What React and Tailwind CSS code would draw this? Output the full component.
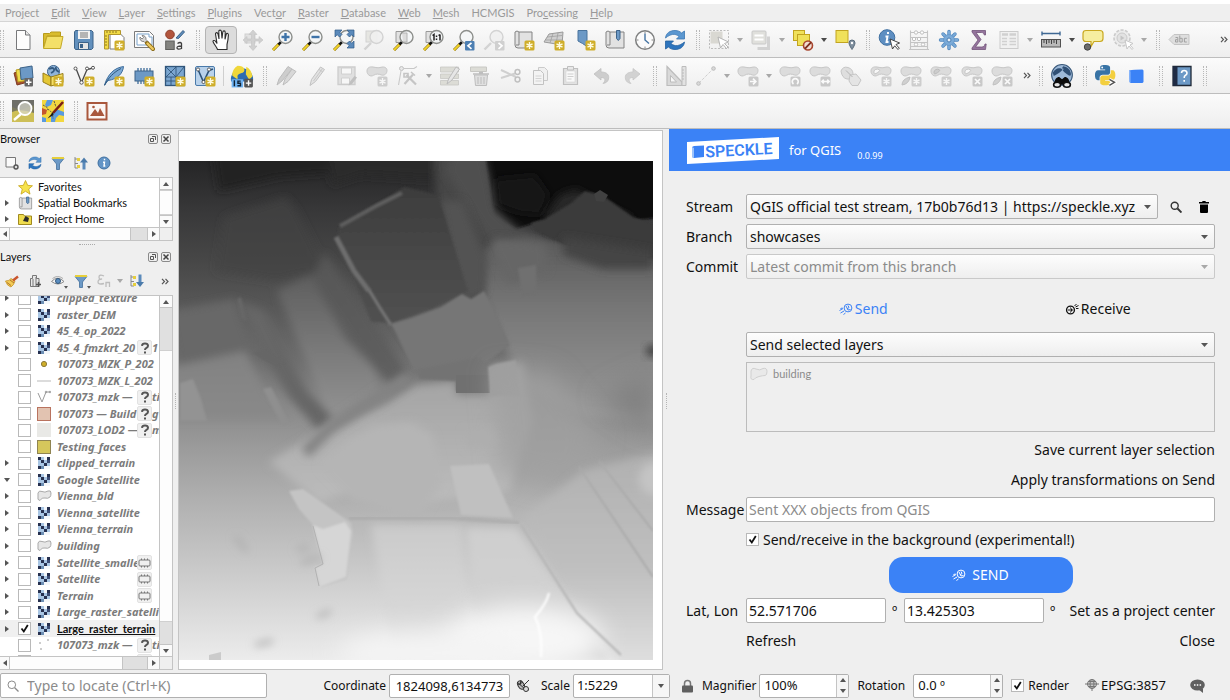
import React from "react";

/* ---------- icon primitives ---------- */

function Svg({ children, size = "size-[22px]", box = "0 0 22 22" }) {
  return (
    <svg viewBox={box} className={`${size} shrink-0`} fill="none" aria-hidden="true">
      {children}
    </svg>
  );
}

const Star = ({ off }) => (
  <g>
    <rect x="11.500" y="11.500" width="10" height="10" rx="1.500" fill={off ? "#cdcdcd" : "#cfae2a"} />
    <path d="M16.500 13v7M13.500 14.800l6 3.400M19.500 14.800l-6 3.400" stroke={off ? "#f6f6f6" : "#fffbe0"} strokeWidth="1.400" />
  </g>
);

const Lens = ({ off, children }) => (
  <g>
    {off ? (
      <path d="M8 14l-6.500 6.500" stroke="#d3d3d3" strokeWidth="2.400" />
    ) : (
      <g>
        <path d="M7 15l-6 6" stroke="#8a6d00" strokeWidth="3" />
        <path d="M7 15l-6 6" stroke="#f1d32c" strokeWidth="1.800" />
        <path d="M9 13l-2.600 2.600" stroke="#111" strokeWidth="2.600" />
      </g>
    )}
    <circle cx="13.500" cy="8" r="6.500" fill={off ? "#f0f0f0" : "#f4f6f7"} fillOpacity=".9" stroke={off ? "#d3d3d3" : "#8d8f8c"} strokeWidth="1.400" />
    {children}
  </g>
);

const Blob = ({ hole }) => (
  <g>
    <path d="M1 6c0-3.500 3-4.500 6-4s5 1.200 8 .3 6 .2 6 3.200-2.500 5.500-5.500 4.500-5-1.500-8 .3S1 10 1 6z" fill="#dcdcdc" stroke="#c6c6c6" />
    {hole && <path d="M4 6.500c0-2 3-3 5-2s-1 3-3 4-2 0-2-2z" fill="#f8f8f8" stroke="#c0c0c0" strokeWidth=".9" />}
  </g>
);

const GreyBadge = ({ d }) => (
  <g>
    <rect x="11.500" y="11.500" width="10" height="10" rx="1.500" fill="#c9c9c9" />
    <path d={d} stroke="#fafafa" strokeWidth="1.700" />
  </g>
);

/* ---------- toolbar drawings ---------- */

const icons = {
  newProject: (
    <Svg>
      <path d="M4.500 1.500h9l4.500 4.500v14.500H4.500z" fill="#fdfdfd" stroke="#77787a" />
      <path d="M13.500 1.500V6H18" fill="#e8e8e8" stroke="#77787a" />
    </Svg>
  ),
  open: (
    <Svg>
      <path d="M1.500 4.500h6l1.500-1.500h9.500v4H5l-3.500 12z" fill="#d9bc2e" stroke="#b89b1c" />
      <path d="M5 7.500h16l-2.500 12h-17z" fill="#f3e069" stroke="#c4a928" />
    </Svg>
  ),
  save: (
    <Svg>
      <path d="M2.500 1.500h16l1.500 1.500v16l-1.500 1.500h-16L1.500 19V3z" fill="#6290bd" stroke="#3c6288" />
      <path d="M5 1.500h12V10H5z" fill="#f3f3f3" />
      <path d="M7 4h8M7 6h8M7 8h8" stroke="#777" />
      <path d="M5.500 13.500h10v7h-10z" fill="#e4e4e4" stroke="#3c6288" />
      <path d="M7 15h3v4H7z" fill="#3c6288" />
    </Svg>
  ),
  layout: (
    <Svg>
      <path d="M7 4.500h10l4 4V20H7z" fill="#fff" stroke="#7a7a7a" />
      <path d="M1.500 1.500h16v4h-12V20h-4z" fill="#f0da45" stroke="#b3972a" />
      <path d="M4 2v2M7 2v2M10 2v2M13 2v2M2 7h2M2 10h2M2 13h2M2 16h2" stroke="#8e7620" />
      <Star />
    </Svg>
  ),
  layoutManager: (
    <Svg>
      <path d="M1.500 2.500h15l4 4v12h-19z" fill="#fbfbfb" stroke="#7a7a7a" />
      <path d="M4 5h12v3h3v8H4z" fill="#fff" stroke="#7ba3cb" />
      <path d="M7 8a3.500 3.500 0 0 0 4 4.500l2 2 2-2-2-2A3.500 3.500 0 0 0 9 6.500l1.500 2-1.500 1.500z" fill="#d6d6d6" stroke="#707070" strokeWidth=".8" />
      <path d="M14 14l6 6" stroke="#8b6b16" strokeWidth="4" strokeLinecap="round" />
      <path d="M14.500 14.500l5.300 5.300" stroke="#ecc85e" strokeWidth="2.400" strokeLinecap="round" />
    </Svg>
  ),
  style: (
    <Svg>
      <circle cx="6" cy="5.500" r="4.300" fill="#b2553d" stroke="#8d3d29" />
      <path d="M12 9l7-7.500 1.500 1.500-6 6.500z" fill="#5d8cbb" stroke="#3c6288" />
      <rect x="1.700" y="12" width="8.500" height="8.500" fill="#848480" stroke="#5f5f5c" />
      <path d="M13.500 14.500q3-2 4 0v5q-4 1.500-4.500-.5t4.500-2" stroke="#3d3d3d" strokeWidth="1.300" />
    </Svg>
  ),
  pan: (
    <Svg>
      <path d="M7.500 20.500c-1-3-3.500-5-4.500-8 0-1.500 2-1.500 3 .5l1 1.500L5.500 5c0-1.800 2-1.800 2.500 0l1 5L8.800 2.500c0-1.800 2.400-1.800 2.600 0l.6 7 .8-6.500c.3-1.700 2.400-1.500 2.400.3l-.2 7 1.200-5c.6-1.500 2.300-1 2.200.6-.2 4-.5 6.500-1.400 9.600v5z" fill="#fff" stroke="#2c2c2c" strokeWidth="1.100" />
    </Svg>
  ),
  panSel: (
    <Svg>
      <rect x="3" y="5" width="10" height="9" fill="#e2e2e2" stroke="#cfcfcf" />
      <path d="M11 1l4 4.500H12.500v4.500H17V7.500l4 3.500-4 3.500V12h-4.500v5H15l-4 4.500L7 17h2.500v-5H5v2.500L1 11l4-3.500V10h4.500V5.500H7z" fill="#d0d0d0" stroke="#c2c2c2" strokeWidth=".6" />
    </Svg>
  ),
  zoomIn: <Svg><Lens><path d="M13.500 4v8M9.500 8h8" stroke="#3e73a8" strokeWidth="2.400" /></Lens></Svg>,
  zoomOut: <Svg><Lens><path d="M9.500 8h8" stroke="#3e73a8" strokeWidth="2.400" /></Lens></Svg>,
  zoomFull: (
    <Svg>
      <Lens />
      <path d="M2 1h7L6.800 3.200 9 5.500 6.500 8 4.200 5.700 2 8zM21 1h-7l2.200 2.200L14 5.500 16.500 8l2.300-2.300L21 8zM21 19h-7l2.200-2.200L14 14.500l2.500-2.500 2.300 2.300L21 12z" fill="#5b8abb" stroke="#2f5a86" strokeWidth=".7" />
    </Svg>
  ),
  zoomSel: <Svg><rect x="3" y="2" width="11" height="11" fill="#e6e6e2" stroke="#d2d2d2" /><Lens off /></Svg>,
  zoomLayer: <Svg><path d="M3 2.500h11v11H3z" fill="#e2e2e2" stroke="#9a9a9a" /><Lens><path d="M9 4h5v9h-4" fill="#dcdcdc" stroke="#aaa" strokeWidth=".8" /></Lens></Svg>,
  zoomNative: (
    <Svg>
      <path d="M3 2.500h11v11H3z" fill="#e2e2e2" stroke="#9a9a9a" />
      <Lens><path d="M9.500 6.500l1.500-1v6M17 5.500v6M15.500 6.500l1.500-1M13.500 6.500v1.500M13.500 9.500v1.500" stroke="#222" strokeWidth="1.500" /></Lens>
    </Svg>
  ),
  zoomLast: <Svg><Lens /><rect x="12" y="12" width="9.500" height="9.500" rx="1" fill="#4d7fb2" /><path d="M18.500 13.800l-3.500 3 3.500 3" stroke="#fff" strokeWidth="1.700" /></Svg>,
  zoomNext: <Svg><Lens off /><rect x="12" y="12" width="9.500" height="9.500" rx="1" fill="#d0d0d0" /><path d="M15.500 13.800l3.500 3-3.500 3" stroke="#fff" strokeWidth="1.700" /></Svg>,
  newMap: <Svg><path d="M2 3q2-2 4 0h13v16H5q-3 0-3-3z" fill="#e2e2e2" stroke="#838383" /><path d="M6 3v13H3" stroke="#838383" /><Star /></Svg>,
  map3d: <Svg><path d="M6 5l14-2-1 13L1 13z" fill="#d0d0d0" stroke="#9a9a9a" /><path d="M10 4.500L7 14M15 4l-2 11M4 8l15-1.500M2.500 11l17 0" stroke="#a0a0a0" strokeWidth=".8" /><Star /></Svg>,
  newBookmark: <Svg><path d="M4 1.500h9v16l-4.500-3L4 12z" fill="#6c99c6" stroke="#49739c" /><Star /></Svg>,
  bookmarks: (
    <Svg>
      <path d="M2 3q2-2 4 0h14v16H5q-3 0-3-3z" fill="#e2e2e2" stroke="#838383" />
      <path d="M6 3v13H3" stroke="#838383" />
      <path d="M12.500 1.500h3.500v8l-1.700 2-1.800-2z" fill="#6c99c6" stroke="#3c6288" />
    </Svg>
  ),
  clock: <Svg><circle cx="11" cy="11" r="9.300" fill="#fbfbfb" stroke="#7f8080" strokeWidth="1.500" /><path d="M11 4.500V11l4 3.500" stroke="#4473a2" strokeWidth="1.400" /><path d="M11 2.500v2M11 17.500v2M2.500 11h2M17.500 11h2" stroke="#888" /></Svg>,
  refresh: (
    <Svg>
      <path d="M1.500 9C2 4 6 1.500 11 1.500c3 0 5 1 6.500 2.500L20.500 2v8h-8L15 7.500C11 4 6.500 5 1.500 9z" fill="#5b97d0" stroke="#3a76b2" strokeWidth=".8" />
      <path d="M20.500 13c-.5 5-4.500 7.500-9.500 7.500-3 0-5-1-6.500-2.500L1.500 20v-8h8L7 14.500c4 3.500 8.500 2.500 13.500-1.500z" fill="#2e75bd" stroke="#2462a0" strokeWidth=".8" />
    </Svg>
  ),
  select: <Svg><rect x="1.500" y="1.500" width="19" height="18" stroke="#bcbcbc" strokeDasharray="2 1.500" /><rect x="2.500" y="2.500" width="12" height="12" fill="#d9d8d2" /><path d="M10 8l2.500 11 2.500-3.500 3.500 4 1.500-1.500-3.500-3.500 4-1.500z" fill="#fff" stroke="#b4b4b4" /></Svg>,
  selectForm: <Svg><path d="M18.500 7.500v12H7.500" stroke="#d2d2d2" strokeWidth="3" /><rect x="2" y="2" width="14" height="13" rx="1" fill="#e0e0dc" stroke="#c8c8c8" /><path d="M4.500 6.500h9M4.500 10.500h9" stroke="#fff" strokeWidth="2" /></Svg>,
  deselect: (
    <Svg>
      <rect x="1.500" y="1.500" width="11" height="10" fill="#f0e15a" stroke="#c2a420" />
      <rect x="5.500" y="5.500" width="12" height="11" fill="#f0e15a" stroke="#c2a420" />
      <circle cx="16" cy="16.500" r="4.500" fill="#f2ddd3" stroke="#a8452e" strokeWidth="1.600" />
      <path d="M13 19.700l6-6.400" stroke="#7c2e1e" strokeWidth="1.800" />
    </Svg>
  ),
  selectLoc: <Svg><rect x="2" y="1.500" width="12" height="12" fill="#f0e15a" stroke="#c2a420" /><path d="M18 11a3 3 0 0 1 3 3c0 2-3 6.500-3 6.500S15 16 15 14a3 3 0 0 1 3-3z" fill="#80909f" stroke="#596b7c" /><circle cx="18" cy="14" r="1.200" fill="#fff" /></Svg>,
  identify: (
    <Svg>
      <circle cx="9" cy="8.500" r="7.800" fill="#5e8fc2" stroke="#3f6fa0" />
      <path d="M10 3v2M7.500 7.500h2l-1 5.500h2" stroke="#fff" strokeWidth="1.900" />
      <path d="M12 10l2.500 10 2.200-3.200 3.300 3.700 1.300-1.300-3.300-3.700 3.600-1.500z" fill="#fff" stroke="#333" strokeWidth=".9" />
    </Svg>
  ),
  abacus: <Svg><path d="M2.500 20V1.500M19.500 20V1.500M1 20.500h20M2.500 3.500h17M2.500 8.500h17M2.500 13.500h17M2.500 17.500h17" stroke="#c4c4c4" strokeWidth="1.100" /><g fill="#fff" stroke="#c0c0c0"><circle cx="8" cy="3.500" r="1.700" /><circle cx="14" cy="3.500" r="1.700" /><circle cx="6" cy="10" r="1.700" /><circle cx="11" cy="10" r="1.700" /><circle cx="8" cy="15.500" r="1.700" /><circle cx="15" cy="15.500" r="1.700" /></g></Svg>,
  gear: <Svg><g stroke="#4f86bd" strokeWidth="3.400" strokeLinecap="round"><path d="M11 2.500v17M2.500 11h17M5 5l12 12M17 5L5 17" /></g><g stroke="#7aaad8" strokeWidth="2" strokeLinecap="round"><path d="M11 2.500v17M2.500 11h17M5 5l12 12M17 5L5 17" /></g><circle cx="11" cy="11" r="5.500" fill="#7aaad8" stroke="#5b90c4" strokeWidth=".6" /><circle cx="11" cy="11" r="2" fill="#e9f0f7" stroke="#4b7fb2" /></Svg>,
  sigma: <Svg><path d="M4 1.500h13.500V6h-1.200c-.5-2-1.300-2.500-3-2.500H8L13 10.500 7.500 18h6c2 0 3-.8 3.500-3h1.200l-.7 5.500H4V19l6-8-6-8z" fill="#94749c" stroke="#72547a" strokeWidth=".8" /></Svg>,
  table: <Svg><rect x="2" y="2.500" width="18" height="17" fill="#f0f0f0" stroke="#cbcbcb" /><path d="M4 5.500h6M11.500 5.500h6.500" stroke="#d0d0d0" strokeWidth="2.400" /><path d="M4 9.500h5M11.500 9.500h6.500M4 12.500h5M11.500 12.500h6.500M4 15.500h5M11.500 15.500h6.500" stroke="#d0d0d0" strokeWidth="1.400" /></Svg>,
  measure: <Svg><path d="M2 4.500h18M2 2.500v4M20 2.500v4" stroke="#3f6894" strokeWidth="1.400" /><rect x="1.500" y="10.500" width="19" height="7.500" fill="#b9b9b9" stroke="#505050" /><path d="M4 11v3M6.500 11v4M9 11v3M11.500 11v4M14 11v3M16.500 11v4" stroke="#444" /></Svg>,
  mapTip: <Svg><path d="M4 1.500h14q3 0 3 3v5q0 3-3 3h-6l-3 5v-5H4q-3 0-3-3v-5q0-3 3-3z" fill="#f6eea0" stroke="#c9a821" strokeWidth="1.200" /><circle cx="5.500" cy="18" r="3.200" fill="#6c6c6c" stroke="#444" /></Svg>,
  action: <Svg><circle cx="10" cy="9" r="8" fill="#ececec" stroke="#cbcbcb" strokeWidth="1.600" strokeDasharray="3 1.500" /><circle cx="10" cy="9" r="5" fill="#e2e2e2" stroke="#cbcbcb" /><path d="M8.500 6.500L12.500 9l-4 2.500z" fill="#c4c4c4" /><path d="M13 11l2 9 2-3 3 3.500 1-1.200-3-3.300 3-1.500z" fill="#fff" stroke="#c7c7c7" /></Svg>,
  label: <Svg><path d="M6 5.500h15v10H6l-5-5z" fill="#dedede" stroke="#c4c4c4" /><path d="M7.500 8.500h2.300v4.500H7.500v-2.300h2M11.800 6.500V13h2.400V9.300h-2.400M18.800 9.300h-2.400V13h2.400" stroke="#a0a0a0" /></Svg>,

  dataSource: <Svg><path d="M2 8l10-3 4 12-11 3z" fill="#a6502f" stroke="#7d3a20" /><path d="M4 5l11-2 2 12-11 2z" fill="#efdb4c" stroke="#b89b1c" /><path d="M8 3l12-2 1 12-12 1.500z" fill="#6c99c6" stroke="#3c6288" /><rect x="12.500" y="13" width="8.500" height="8.500" rx="1" fill="#666" /><path d="M16.700 14.500v5.500M14 17.200h5.500" stroke="#fff" strokeWidth="1.500" /></Svg>,
  geopackage: <Svg><circle cx="11.500" cy="6.500" r="6" fill="#8fb3d8" stroke="#39618a" /><path d="M7 4q4-2 5 0t-3 4M14 2q-1 3 3 5" stroke="#345a80" strokeWidth="1.800" /><path d="M1 8l8 4v9l-8-4z" fill="#e4c735" stroke="#977c18" /><path d="M9 12l12-3.500v9L9 21z" fill="#f5df66" stroke="#977c18" /><Star /></Svg>,
  shapefile: <Svg><path d="M3 3.500l5.500 14L14 4.500l6-1.500" stroke="#4a4a4a" strokeWidth="1.300" /><g fill="#fff" stroke="#555"><circle cx="2.500" cy="3.500" r="1.500" /><circle cx="8.500" cy="17.500" r="1.700" /><circle cx="14" cy="3.500" r="1.500" /><circle cx="20" cy="2.800" r="1.500" /></g><Star /></Svg>,
  spatialite: <Svg><path d="M1.500 20C5 9 11 3 20.500 1.500 20 8 15 14 5 15.500z" fill="#7ca9d4" stroke="#3f6e9c" /><path d="M1.500 20.500C5 13 11 7 18 3.500" stroke="#2e587f" /><Star /></Svg>,
  memory: <Svg><path d="M5 3v16M8 3v16M11 3v16M14 3v16M17 3v16" stroke="#3f6e9c" strokeWidth="1.300" /><rect x="2" y="6" width="18" height="10" fill="#6c99c6" stroke="#3c6288" /><Star /></Svg>,
  mesh: <Svg><rect x="1.500" y="1.500" width="19" height="19" fill="#7ba6d0" stroke="#31567b" strokeWidth="1.300" /><path d="M1.500 12h19M12 1.500v19M2 2l10 10 8-10M2 12L12 2M7 12v8M2 16h10" stroke="#31567b" strokeWidth=".9" /><Star /></Svg>,
  virtual: <Svg><rect x="1.500" y="1.500" width="19" height="19" rx="1.500" fill="#b9d2eb" stroke="#4a7aaa" /><path d="M4 4.500L9.500 17 15 5.500l4-1.500" stroke="#2d5379" strokeWidth="1.600" /><g fill="#fff" stroke="#444" strokeWidth=".8"><circle cx="4" cy="4.500" r="1.600" /><circle cx="9.500" cy="17" r="1.600" /><circle cx="15" cy="4.500" r="1.600" /></g><Star /></Svg>,
  gis: <Svg size="size-6"><path d="M1 16A10.200 10.200 0 1 1 21 16z" fill="#2f6db0" /><path d="M7 1.500q5 0 6 3t-3 4-3 4-5-2q0-6 5-9zM15 2.500q5 3 5.500 9l-3 3-3-5z" fill="#f0d73a" /><path d="M1.500 14H12v7.500H1.500z" fill="#6fb3f2" /><path d="M4 15v5.500M9.800 15.700H7.300v2h2.300v2.300H6.800" stroke="#123" strokeWidth="1.300" /><rect x="13" y="13.500" width="8" height="8" rx="1" fill="#555" /><path d="M17 15v5M14.500 17.500h5" stroke="#fff" strokeWidth="1.300" /></Svg>,
  edits: <Svg><path d="M2 20l2-6L13 1.500l4 2.500-10 12z" fill="#cdcdcd" stroke="#bdbdbd" /><path d="M8 20l2-6L17 4l4 2.500-8 10z" fill="#d8d8d8" stroke="#bdbdbd" /></Svg>,
  pencil: <Svg><path d="M4 20.500l1.500-6L14.500 2l4 2.500-9 12z" fill="#e2e2e2" stroke="#c2c2c2" /><path d="M13 4.500l4 2.500M16.500 3.500l-9 12.500" stroke="#c8c8c8" /></Svg>,
  saveEdits: <Svg><path d="M2 2h17v17.500H2z" fill="#e0e0e0" stroke="#cdcdcd" strokeWidth="1.300" /><path d="M5.500 3h10v6h-10zM5.500 13h8v6h-8z" fill="#f7f7f7" stroke="#cdcdcd" strokeWidth=".9" /><path d="M12.500 20.500l1.500-4 4.500-5.500 2.500 1.500-5 6.500z" fill="#c0c0c0" /></Svg>,
  addPoly: <Svg><Blob /><Star off /></Svg>,
  vertex: <Svg><circle cx="4.500" cy="3.500" r="2" fill="#e8e8e8" stroke="#c2c2c2" /><path d="M4 6L1.500 20M7 3.500h10l3-2" stroke="#c8c8c8" strokeWidth="1.100" /><path d="M7.500 19L16 9.500M9.500 10l9.500 9.500" stroke="#c5c5c5" strokeWidth="2.200" /><path d="M7 8.500h4v3.500H7zM14 7l4 3.500" stroke="#c5c5c5" strokeWidth="1.600" /></Svg>,
  attrs: <Svg><path d="M1.500 2h18v5h-18zM1.500 9h18v4.500h-18zM1.500 15.500h18v4.500h-18z" fill="#dcdcd6" stroke="#c8c8c4" strokeWidth=".8" /><path d="M8 19l1.500-5L17 2l3.500 2-7.500 11z" fill="#e6e6e6" stroke="#bcbcbc" /></Svg>,
  trash: <Svg><path d="M1.500 2h16v4.500h-16z" fill="#dcdcd6" stroke="#c8c8c4" /><path d="M4 9h16M10 7.500h4" stroke="#bebebe" strokeWidth="1.600" /><path d="M5.500 10h13l-1 10.500h-11z" fill="#e0e0e0" stroke="#bebebe" /><path d="M9 12v7M12 12v7M15 12v7" stroke="#bcbcbc" /></Svg>,
  cut: <Svg><path d="M1 5l15 7M1 13l14-4.500" stroke="#d0d0d0" strokeWidth="2" /><circle cx="17.500" cy="7" r="2.400" stroke="#c0c0c0" strokeWidth="1.500" /><circle cx="17.500" cy="14.500" r="2.400" stroke="#c0c0c0" strokeWidth="1.500" /></Svg>,
  copy: <Svg><path d="M8.500 2.500h6l3 3v10h-9z" fill="#f0f0f0" stroke="#cacaca" /><path d="M3.500 5.500h7l3 3v11h-10z" fill="#f3f3f3" stroke="#c2c2c2" /><path d="M5.500 11h6M5.500 13.500h6M5.500 16h6" stroke="#d3d3d3" /></Svg>,
  paste: <Svg><path d="M3.500 3.500h14v16h-14z" fill="#e2e2e2" stroke="#c0c0c0" strokeWidth="1.200" /><path d="M6 6h9v11H6z" fill="#f9f9f9" stroke="#d4d4d4" strokeWidth=".6" /><path d="M7.500 1.500h6V5h-6z" fill="#e9e9e9" stroke="#bfbfbf" /><path d="M7.500 9h6M7.500 11.500h6M7.500 14h4" stroke="#cecece" /></Svg>,
  undo: <Svg><path d="M3 9l7-5.500V7c6 0 8.500 3 7.500 7-.5 2.500-2.500 4-5.500 4.500 3-3 2.500-6-2-6V15z" fill="#cdcdcd" stroke="#c0c0c0" strokeWidth=".8" /></Svg>,
  redo: <Svg><path d="M19 9l-7-5.500V7c-6 0-8.500 3-7.500 7 .5 2.500 2.500 4 5.500 4.500-3-3-2.500-6 2-6V15z" fill="#d2d2d2" stroke="#c6c6c6" strokeWidth=".8" /></Svg>,
  cad: <Svg><path d="M2 1.500L17 17v3.500H2z" fill="#d9d9d9" stroke="#bcbcbc" strokeWidth="1.200" /><path d="M5.500 10.500l6 6.500h-6z" fill="#f7f7f7" stroke="#bcbcbc" /><path d="M17 1.500h4V20.500h-4z" fill="#e2e2e2" stroke="#bcbcbc" /><path d="M17 5h2M17 8h2M17 11h2M17 14h2" stroke="#bcbcbc" /></Svg>,
  segment: <Svg><path d="M4 18L18 4" stroke="#cfcfcf" strokeDasharray="3 1.500" /><circle cx="3.500" cy="18.500" r="1.800" fill="#d9d9d9" stroke="#bcbcbc" /><circle cx="18.500" cy="3.500" r="1.800" fill="#d9d9d9" stroke="#bcbcbc" /></Svg>,
  move: <Svg><Blob /><GreyBadge d="M13 16.500h5M16 13.700l2.800 2.800L16 19.300" /></Svg>,
  rotate: <Svg><Blob /><GreyBadge d="M14.500 19a3 3 0 1 1 3.500 0" /></Svg>,
  scale: <Svg><Blob /><GreyBadge d="M13 16.500h7M14.800 14.700L13 16.500l1.800 1.800M18.200 14.700l1.800 1.800-1.800 1.800" /></Svg>,
  simplify: <Svg><path d="M1 6q2-5 7-3.500T13 9q-1 6-6 5T1 6z" fill="#dedede" stroke="#c6c6c6" /><path d="M10 10l6-1 5 6-3 5.500h-6L9 16z" fill="#e4e4e4" stroke="#c6c6c6" /><path d="M6 5.500l6.500 6.500" stroke="#b5b5b5" /></Svg>,
  ring: <Svg><Blob hole /><Star off /></Svg>,
  part: <Svg><Blob /><path d="M2 20q0-6 8-8-1 7-8 8z" fill="#d0d0d0" stroke="#c0c0c0" /><Star off /></Svg>,
  fillRing: <Svg><Blob /><path d="M4 7c0-2 3-3.500 5-2.500s-1 3-3 4-2 0-2-1.500z" fill="#cdcdcd" stroke="#bcbcbc" /><Star off /></Svg>,
  delRing: <Svg><Blob hole /><GreyBadge d="M14 14l5 5M19 14l-5 5" /></Svg>,
  delPart: <Svg><Blob /><path d="M2 20q0-6 8-8-1 7-8 8z" fill="#d0d0d0" stroke="#c0c0c0" /><GreyBadge d="M14 14l5 5M19 14l-5 5" /></Svg>,
  metasearch: <Svg size="size-6"><circle cx="11" cy="10" r="9.500" fill="#9db9d8" stroke="#39587a" /><path d="M2.500 8q3-5 7-4t-1 4-5 3M12 2q6 1 7 6t-4 1-3-4-1-1" fill="#2f4f74" /><path d="M4 19c0-5 2-7 4.500-7L11 14l2.500-2c2.500 0 4.500 2 4.500 7z" fill="#0c0c0c" /><ellipse cx="6.500" cy="19" rx="3.200" ry="2.300" fill="#e5e5e5" stroke="#111" strokeWidth="1.400" /><ellipse cx="15.500" cy="19" rx="3.200" ry="2.300" fill="#e5e5e5" stroke="#111" strokeWidth="1.400" /></Svg>,
  python: (
    <Svg box="0 0 26 26">
      <path d="M14.250.18l.9.2.73.26.59.3.45.32.34.34.25.34.16.33.1.3.04.26.02.2-.01.13V8.500l-.05.63-.13.55-.21.46-.26.38-.3.31-.33.25-.35.19-.35.14-.33.1-.3.07-.26.04-.21.02H8.770l-.69.05-.59.14-.5.22-.41.27-.33.32-.27.35-.2.36-.15.37-.1.35-.07.32-.04.27-.02.21v3.060H3.170l-.21-.03-.28-.07-.32-.12-.35-.18-.36-.26-.36-.36-.35-.46-.32-.59-.28-.73-.21-.88-.14-1.050-.05-1.230.06-1.220.16-1.040.24-.87.32-.71.36-.57.4-.44.42-.33.42-.24.4-.16.36-.1.32-.05.24-.01h.16l.06.01h8.160v-.83H6.180l-.01-2.750-.02-.37.05-.34.11-.31.17-.28.25-.26.31-.23.38-.2.44-.18.51-.15.58-.12.64-.1.71-.06.77-.04.84-.02 1.270.05z" fill="#3873a5" />
      <g transform="rotate(180 12 12)">
        <path d="M14.250.18l.9.2.73.26.59.3.45.32.34.34.25.34.16.33.1.3.04.26.02.2-.01.13V8.500l-.05.63-.13.55-.21.46-.26.38-.3.31-.33.25-.35.19-.35.14-.33.1-.3.07-.26.04-.21.02H8.770l-.69.05-.59.14-.5.22-.41.27-.33.32-.27.35-.2.36-.15.37-.1.35-.07.32-.04.27-.02.21v3.060H3.170l-.21-.03-.28-.07-.32-.12-.35-.18-.36-.26-.36-.36-.35-.46-.32-.59-.28-.73-.21-.88-.14-1.050-.05-1.230.06-1.220.16-1.040.24-.87.32-.71.36-.57.4-.44.42-.33.42-.24.4-.16.36-.1.32-.05.24-.01h.16l.06.01h8.160v-.83H6.180l-.01-2.750-.02-.37.05-.34.11-.31.17-.28.25-.26.31-.23.38-.2.44-.18.51-.15.58-.12.64-.1.71-.06.77-.04.84-.02 1.270.05z" fill="#f3cf3f" />
      </g>
      <circle cx="8.500" cy="3" r="1.100" fill="#fff" />
      <path d="M17 17l6 3.500-6 3.500" stroke="#fff" strokeWidth="4" />
      <path d="M17 17l6 3.500-6 3.500" stroke="#555" strokeWidth="1.700" />
    </Svg>
  ),
  speckle: <Svg><path d="M4 5.500q5-1 13.500-1l1 1V17l-1 1H5.500L4.500 17z" fill="#3b82f6" /><path d="M4 5.500l1.500 1V18l-1-1z" fill="#8db9fb" /></Svg>,
  help: <Svg><path d="M2 1.500h18v19H2z" fill="#6c99c6" stroke="#1f2937" strokeWidth="1.300" /><path d="M2 1.500h4.500v19H2z" fill="#1f2b44" /><path d="M10.500 8q.2-2.500 2.700-2.500T16 8q0 1.500-1.500 2.300T13.200 13M13.200 15v1.800" stroke="#fff" strokeWidth="1.600" /></Svg>,
  qms: <Svg><path d="M0 0h22v22H0z" fill="#7c7a5e" /><path d="M0 12q8-4 22 1v9H0z" fill="#cdbf57" /><path d="M0 0h22v5L8 10 0 7z" fill="#6e6e68" /><path d="M9 14l-7 6" stroke="#fff" strokeWidth="2.400" /><circle cx="13" cy="8.500" r="6.500" fill="#d8d8cc" fillOpacity=".7" stroke="#fff" strokeWidth="1.800" /></Svg>,
  hcm: <Svg><path d="M0 0h22v22H0z" fill="#f3d83f" /><path d="M5 0h6L9 5 5 7 3 5zM14 9l8 3v4l-5-1-3 3-4-3zM9 15l5 3-1 4H9zM0 17l4 1v4H0z" fill="#5a9adf" /><path d="M0 8l5 2-1 4-4 1z" fill="#c4572f" /><path d="M5 9q6 2 6 10M12 1l2 6M1 5l5 3" stroke="#444" strokeWidth=".9" strokeDasharray="2 1" /><path d="M21 2L11 13" stroke="#7c1e14" strokeWidth="2.600" /><path d="M11 12l-5.500 6.500 6-3.500z" fill="#181818" /></Svg>,
  image: <Svg><path d="M1.500 3h19v16.500h-19z" fill="#fbf6f4" stroke="#a9573c" strokeWidth="2" /><path d="M4 16l5-7 3 4 2-5 4.500 8z" fill="#a9573c" /><circle cx="7.500" cy="7" r="1.300" fill="#a9573c" /></Svg>,
};

/* ---------- toolbars ---------- */

function Grip({ width = "w-3.5" }) {
  return (
    <div className={`${width} flex shrink-0 justify-end pr-1`}>
      <div className="h-5 w-1 border-x border-dotted border-[#b9b9b9]" />
    </div>
  );
}

function Group({ names, width, active }) {
  return (
    <div className={`flex shrink-0 ${width}`}>
      {names.map((n) => (
        <button
          key={n}
          type="button"
          aria-label={n}
          className={
            n === active
              ? "mx-px flex h-7 flex-1 items-center justify-center rounded-sm border border-[#b4b4b4] bg-[#dcdcdc]"
              : "flex h-7 flex-1 items-center justify-center"
          }
        >
          {icons[n]}
        </button>
      ))}
    </div>
  );
}

function Drop({ off, width = "w-3" }) {
  return (
    <button type="button" aria-label="More options" className={`${width} flex h-7 shrink-0 items-center justify-center`}>
      <svg viewBox="0 0 6 4" className="w-1.5">
        <path d="M0 0h6L3 4z" fill={off ? "#a8a8a8" : "#4a4a4a"} />
      </svg>
    </button>
  );
}

function More({ className, label }) {
  return (
    <button type="button" aria-label={label} className={`${className} flex h-5 shrink-0 items-center justify-center`}>
      <svg viewBox="0 0 8 7" className="w-2" fill="none" stroke="#555" strokeWidth="1.200">
        <path d="M1 .8l2.500 2.700L1 6.200M4.500.8L7 3.500 4.500 6.200" />
      </svg>
    </button>
  );
}

function Toolbar({ height, children }) {
  return (
    <div className={`${height} flex shrink-0 items-center overflow-hidden border-b border-[#bdbdbd] bg-gradient-to-b from-[#fbfbfb] to-[#eeeeee]`}>
      {children}
    </div>
  );
}

const menus = [
  ["Pro", "j", "ect"], ["", "E", "dit"], ["", "V", "iew"], ["", "L", "ayer"], ["", "S", "ettings"],
  ["", "P", "lugins"], ["Vect", "o", "r"], ["", "R", "aster"], ["", "D", "atabase"], ["", "W", "eb"],
  ["", "M", "esh"], ["HCMGIS", "", ""], ["Pro", "c", "essing"], ["", "H", "elp"],
];

function Header() {
  return (
    <header className="shrink-0">
      <nav className="flex h-[22px] items-end gap-3 border-t-4 border-b border-t-white border-b-[#d5d5d5] bg-[#efefef] pl-[5px] font-[Lato,'Noto_Sans',sans-serif] text-[11px] leading-4 text-[#999]">
        {menus.map(([a, u, b]) => (
          <button key={a + u + b} type="button">
            {a}<u>{u}</u>{b}
          </button>
        ))}
      </nav>
      <Toolbar height="h-9">
        <Grip width="w-2" />
        <Group width="w-[182px]" names={["newProject", "open", "save", "layout", "layoutManager", "style"]} />
        <Grip />
        <Group
          width="w-[486px]"
          active="pan"
          names={["pan", "panSel", "zoomIn", "zoomOut", "zoomFull", "zoomSel", "zoomLayer", "zoomNative", "zoomLast", "zoomNext", "newMap", "map3d", "newBookmark", "bookmarks", "clock", "refresh"]}
        />
        <Grip />
        <Group width="w-[30px]" names={["select"]} />
        <Drop off />
        <Group width="w-[30px]" names={["selectForm"]} />
        <Drop off />
        <Group width="w-[30px]" names={["deselect"]} />
        <Drop />
        <Group width="w-[30px]" names={["selectLoc"]} />
        <Grip />
        <Group width="w-[150px]" names={["identify", "abacus", "gear", "sigma", "table"]} />
        <Drop off />
        <Group width="w-[30px]" names={["measure"]} />
        <Drop />
        <Group width="w-[60px]" names={["mapTip", "action"]} />
        <Drop off />
        <Grip />
        <Group width="w-[30px]" names={["label"]} />
        <More label="More toolbar items" className="ml-auto w-3" />
      </Toolbar>
      <Toolbar height="h-9">
        <Grip width="w-2" />
        <Group width="w-[212px]" names={["dataSource", "geopackage", "shapefile", "spatialite", "memory", "mesh", "virtual"]} />
        <div className="mx-[3px] h-5 w-px bg-[#cfcfcf]" />
        <Group width="w-[30px]" names={["gis"]} />
        <Grip />
        <Group width="w-[152px]" names={["edits", "pencil", "saveEdits", "addPoly", "vertex"]} />
        <Drop off />
        <Group width="w-[212px]" names={["attrs", "trash", "cut", "copy", "paste", "undo", "redo"]} />
        <Grip />
        <Group width="w-[60px]" names={["cad", "segment"]} />
        <Drop off />
        <Group width="w-[30px]" names={["move"]} />
        <Drop off />
        <Group width="w-[242px]" names={["rotate", "scale", "simplify", "ring", "part", "fillRing", "delRing", "delPart"]} />
        <More label="More digitizing tools" className="w-5" />
        <Grip width="w-2.5" />
        <Group width="w-[30px]" names={["metasearch"]} />
        <Grip />
        <Group width="w-[60px]" names={["python", "speckle"]} />
        <Grip width="w-4" />
        <Group width="w-[30px]" names={["help"]} />
        <Grip />
      </Toolbar>
      <Toolbar height="h-[35px]">
        <Grip width="w-2" />
        <Group width="w-[60px]" names={["qms", "hcm"]} />
        <Grip />
        <Group width="w-[30px]" names={["image"]} />
      </Toolbar>
    </header>
  );
}

/* ---------- docks ---------- */

function DockTitle({ children }) {
  return (
    <div className="flex h-5 shrink-0 items-center gap-[3px] pr-0.5">
      <h2 className="flex-1">{children}</h2>
      <button type="button" aria-label={`Float ${children}`} className="grid size-2.5 place-items-center rounded-xs border border-[#8a8a8a]">
        <svg viewBox="0 0 8 8" className="size-2" fill="none" stroke="#555"><path d="M3 1.500h3.500V5M1.500 3.500H4.500v3h-3z" /></svg>
      </button>
      <button type="button" aria-label={`Close ${children}`} className="grid size-2.5 place-items-center rounded-xs border border-[#8a8a8a]">
        <svg viewBox="0 0 8 8" className="size-2" stroke="#444" strokeWidth="1.500"><path d="M1.500 1.500l5 5M6.500 1.500l-5 5" /></svg>
      </button>
    </div>
  );
}

const small = {
  add: <Svg size="size-3.5" box="0 0 14 14"><path d="M1 1.500h9.500V11H1z" fill="#fafafa" stroke="#777" /><circle cx="11" cy="11" r="2" fill="#ddd" stroke="#555" strokeWidth="1.400" /></Svg>,
  filter: <Svg size="size-3.5" box="0 0 14 14"><path d="M1 2.500h12L8.500 8v5.500h-3V8z" fill="#6c99c6" stroke="#44709c" strokeWidth=".8" /><path d="M1 1h12v2H1z" fill="#e6cf3c" /></Svg>,
  collapse: <Svg size="size-3.5" box="0 0 14 14"><path d="M1 1v11M1 3h3M1 7.500h3M1 12h3" stroke="#888" /><path d="M3 2h3v3H3zM3 9h3v3H3z" fill="#e6cf3c" /><path d="M10 13.500V5" stroke="#5b8abb" strokeWidth="3" /><path d="M6 6.500L10 1.500l4 5z" fill="#4a7aaa" /></Svg>,
  expand: <Svg size="size-3.5" box="0 0 14 14"><path d="M1 1v11M1 3h3M1 7.500h3M1 12h3" stroke="#888" /><path d="M3 2h3v3H3zM3 9h3v3H3z" fill="#e6cf3c" /><path d="M10 .5V9" stroke="#5b8abb" strokeWidth="3" /><path d="M6 8l4 5 4-5z" fill="#4a7aaa" /></Svg>,
  info: <Svg size="size-3.5" box="0 0 14 14"><circle cx="7" cy="7" r="6" fill="#6294c6" stroke="#3f6fa0" /><path d="M7.500 2.800v1.500M6 6.300h1.500L7 10h1.300" stroke="#fff" strokeWidth="1.400" /></Svg>,
  brush: <Svg size="size-3.5" box="0 0 14 14"><path d="M.5 7q4 0 5.500-2.500L10 7q-1 4-4 6Q2 12 .5 7z" fill="#f2cb55" stroke="#c4922a" strokeWidth=".8" /><path d="M13 2.500L8 6.500" stroke="#c8552e" strokeWidth="2.400" /><path d="M2 8.500l4 3M5 6l4 3" stroke="#b4762a" /></Svg>,
  group: <Svg size="size-3.5" box="0 0 14 14"><path d="M2.500 12.500v-8h2v-3h4v3H11v8z" fill="#e8e8e8" stroke="#777" /><path d="M5 5v7M8 3v9" stroke="#777" /><path d="M10.500 8v5M8 10.500h5" stroke="#555" strokeWidth="1.400" /></Svg>,
  eye: <Svg size="size-3.5" box="0 0 14 14"><path d="M.5 7.500q6-6.500 12.500 0-6 5-12.500 0z" fill="#f6f6f6" stroke="#888" /><circle cx="7" cy="7" r="2.500" fill="#5a8dc0" stroke="#34587c" /><path d="M1.500 4.500q5-4 10.500 0" stroke="#aaa" /></Svg>,
  expr: <Svg size="size-3.5" box="0 0 14 14"><path d="M7 2Q2 0 2 3t3 2Q1 5 1 8t6 1.500M9 13V8.500h3.500V13" stroke="#bdbdbd" strokeWidth="1.300" /></Svg>,
};

function SmallButton({ label, width = "w-[23px]", menu, children }) {
  return (
    <button type="button" aria-label={label} className={`${width} relative flex h-5 shrink-0 items-center justify-center`}>
      {children}
      {menu && <svg viewBox="0 0 6 4" className="absolute right-px bottom-0.5 w-1"><path d="M0 0h6L3 4z" fill="#555" /></svg>}
    </button>
  );
}

const tri = { r: "M1 0l4 3-4 3z", l: "M5 0L1 3l4 3z", u: "M0 5l3-4 3 4z", d: "M0 1h6L3 5z" };

function Tri({ dir, color = "#555" }) {
  return <svg viewBox="0 0 6 6" className="size-1.5 shrink-0"><path d={tri[dir]} fill={color} /></svg>;
}

function ScrollEnd({ dir, className }) {
  return (
    <button type="button" tabIndex={-1} aria-label="Scroll" className={`${className} flex shrink-0 items-center justify-center bg-[#fafafa]`}>
      <Tri dir={dir} />
    </button>
  );
}

function TreeBox({ children, before, after, tail }) {
  return (
    <div className="flex h-full flex-col border-y border-r border-[#c4c4c4] bg-white">
      <div className="flex min-h-0 flex-1">
        <div className="min-w-0 flex-1 overflow-hidden">{children}</div>
        <div className="flex w-[13px] flex-col border-l border-[#c4c4c4] bg-[#e0e0e0]">
          <ScrollEnd dir="u" className="h-3 border-b border-[#c4c4c4]" />
          <div className={before} />
          <div className="flex-1 border-y border-[#d0d0d0] bg-[#fdfdfd]" />
          <div className={after} />
          <ScrollEnd dir="d" className="h-3 border-t border-[#c4c4c4]" />
        </div>
      </div>
      <div className="flex h-[13px] shrink-0 border-t border-[#c4c4c4] bg-[#e0e0e0]">
        <ScrollEnd dir="l" className="w-2.5 border-r border-[#c4c4c4]" />
        <div className="flex-1 border-r border-[#c4c4c4] bg-[#fdfdfd]" />
        <div className={tail} />
        <ScrollEnd dir="r" className="w-3 border-l border-[#c4c4c4]" />
        <div className="w-[13px] border-l border-[#c4c4c4] bg-[#efefef]" />
      </div>
    </div>
  );
}

const Raster = () => (
  <svg viewBox="0 0 12 12" className="ml-px size-3">
    <path d="M0 0h12v12H0z" fill="#f4f7fa" />
    <path d="M0 0h3v3H0zM9 0h3v3H9zM3 3h3v3H3zM6 6h3v3H6zM9 3h0zM0 9h3v3H0zM6 0h0z" fill="#26304f" />
    <path d="M3 0h3v3H3zM0 3h3v3H0zM6 3h3v3H6zM3 6h3v3H3zM0 6h3v3H0zM3 9h3v3H3zM9 6h3v3H9z" fill="#a9c6e4" />
    <path d="M9 3h3v3H9z" fill="#3d4d75" />
    <path d="M3 9h3v3H3z" fill="#6c8fb5" />
  </svg>
);

const layerIcons = {
  raster: <Raster />,
  point: <svg viewBox="0 0 14 14" className="size-3.5"><circle cx="7" cy="7" r="2.600" fill="#cfae2a" stroke="#8c7a3a" /></svg>,
  line: <svg viewBox="0 0 14 14" className="size-3.5"><path d="M0 7h14" stroke="#c4c4c4" strokeWidth="1.200" /></svg>,
  vee: <svg viewBox="0 0 14 14" className="size-3.5" fill="none" stroke="#9a9a9a"><path d="M1 3l4 9 4-10 4 0" /><circle cx="13" cy="2" r=".8" /><circle cx="9" cy="2" r=".8" /></svg>,
  pink: <span className="block size-3.5 border border-[#b9735f] bg-[#e2c3b1]" />,
  pale: <span className="block size-3.5 bg-[#e9e9e6]" />,
  olive: <span className="block size-3.5 border border-[#8f8452] bg-[#d5c75c]" />,
  poly: <svg viewBox="0 0 15 12" className="w-[15px]"><path d="M1 3q1-3 4-1.500t6-.5q3-1 3 2t-1 4q-2 2-5 1T3 10.500Q0 10 1 7z" fill="#e6e6e6" stroke="#a9a9a9" /></svg>,
  dots: <svg viewBox="0 0 14 14" className="size-3.5" fill="#bbb"><circle cx="3" cy="5" r="1" /><circle cx="11" cy="2" r="1" /><circle cx="4" cy="11" r="1" /></svg>,
};

/* name, icon, expander, indicator, text right of the indicator */
const layers = [
  ["clipped_texture", "raster", "r"], ["raster_DEM", "raster", "r"], ["45_4_op_2022", "raster", "r"],
  ["45_4_fmzkrt_20", "raster", "r", "q", "1"], ["107073_MZK_P_202", "point", ""], ["107073_MZK_L_202", "line", ""],
  ["107073_mzk —", "vee", "", "q", "ti"], ["107073 — Build", "pink", "", "q", "g"], ["107073_LOD2 —", "pale", "", "q", "m"],
  ["Testing_faces", "olive", ""], ["clipped_terrain", "raster", "r"], ["Google Satellite", "raster", "d"],
  ["Vienna_bld", "poly", "r"], ["Vienna_satellite", "raster", "r"], ["Vienna_terrain", "raster", "r"],
  ["building", "poly", "r"], ["Satellite_smalle", "raster", "r", "m"], ["Satellite", "raster", "r", "m"],
  ["Terrain", "raster", "r", "m"], ["Large_raster_satelli", "raster", "r"], ["Large_raster_terrain", "raster", "r"],
  ["107073_mzk —", "dots", "", "q", "ti"], ["", "raster", "", "q"],
];

function Check({ checked, label, id, border = "border-[#b9b9b9]" }) {
  return (
    <span className="inline-grid shrink-0">
      <input id={id} type="checkbox" defaultChecked={checked} aria-label={label} className={`peer size-[13px] appearance-none border ${border} bg-white [grid-area:1/1]`} />
      <svg viewBox="0 0 13 13" className="pointer-events-none hidden size-[13px] peer-checked:block [grid-area:1/1]" fill="none">
        <path d="M3.500 6.500l2.300 3L9.800 3" stroke="#111" strokeWidth="1.800" />
      </svg>
    </span>
  );
}

function LayerRow({ name, icon, arrow, mark, tail }) {
  const current = name === "Large_raster_terrain";
  const tone = current ? "font-[Lato,'Noto_Sans',sans-serif] text-[#111] underline" : "text-[#7b7b7b] italic";
  return (
    <li className={`flex min-h-0 flex-1 items-center overflow-hidden whitespace-nowrap ${current ? "bg-[#f0f0f0]" : ""}`}>
      <span className="flex w-[18px] shrink-0 pl-1">{arrow && <Tri dir={arrow} />}</span>
      <Check checked={current} label={name} />
      <span className="ml-1.5 flex w-5 shrink-0 items-center">{layerIcons[icon]}</span>
      <span className={`leading-4 font-bold ${mark ? "w-20 shrink-0" : ""} ${tone}`}>{name}</span>
      {mark && (
        <span className="flex size-[15px] shrink-0 items-center justify-center rounded-xs border border-[#e2e2e2] bg-[#f0f0f0]">
          {mark === "q" ? (
            <svg viewBox="0 0 10 12" className="h-3" fill="none" stroke="#555" strokeWidth="2"><path d="M2 3.800Q2.200 1.500 5 1.500t3 2.200Q8 5 6.500 5.800T5 8M5 9.500v2" /></svg>
          ) : (
            <svg viewBox="0 0 13 10" className="w-[13px]" fill="none" stroke="#777"><rect x="1" y="2" width="11" height="6" rx="1" /><path d="M3.500.5v1.500M6.500.5v1.500M9.500.5v1.500M3.500 8v1.500M6.500 8v1.500M9.500 8v1.500" /></svg>
          )}
        </span>
      )}
      {tail && <span className={`leading-4 font-bold ${tone}`}>{tail}</span>}
    </li>
  );
}

function BrowserRow({ arrow, icon, children }) {
  return (
    <li className="flex h-4 items-center whitespace-nowrap">
      <span className="flex w-[18px] pl-1">{arrow && <Tri dir="r" />}</span>
      <span className="flex w-5">{icon}</span>
      {children}
    </li>
  );
}

function Docks() {
  return (
    <aside className="flex w-[173px] shrink-0 flex-col font-[Lato,'Noto_Sans',sans-serif] text-[11px] text-[#111]">
      <DockTitle>Browser</DockTitle>
      <div className="flex h-7 shrink-0 items-center">
        <SmallButton label="Add selected layers">{small.add}</SmallButton>
        <SmallButton label="Refresh"><span className="[&>svg]:size-3.5">{icons.refresh}</span></SmallButton>
        <SmallButton label="Filter browser">{small.filter}</SmallButton>
        <SmallButton label="Collapse all">{small.collapse}</SmallButton>
        <SmallButton label="Properties">{small.info}</SmallButton>
      </div>
      <div className="h-16 shrink-0">
        <TreeBox before="h-0" after="h-0" tail="w-4">
          <ul className="pt-px">
            <BrowserRow icon={<svg viewBox="0 0 14 14" className="size-[15px]"><path d="M7 .5l2 4.500 4.500.4-3.500 3 1.200 4.800L7 10.500l-4.200 2.700L4 8.400.5 5.400 5 5z" fill="#f6e24c" stroke="#c9a821" strokeWidth=".8" /></svg>}>Favorites</BrowserRow>
            <BrowserRow arrow icon={<span className="[&>svg]:size-[15px]">{icons.bookmarks}</span>}>Spatial Bookmarks</BrowserRow>
            <BrowserRow arrow icon={<svg viewBox="0 0 14 14" className="size-3.5"><path d="M.5 2.500h5l1 1.500h7v8.500H.5z" fill="#efdc4e" stroke="#a08a20" /><path d="M5 9l2.500-5 3.500 2-1 4z" fill="#2c2c2c" /></svg>}>Project Home</BrowserRow>
          </ul>
        </TreeBox>
      </div>
      <div className="flex h-1.5 shrink-0 items-center justify-center"><div className="w-4 border-t border-dotted border-[#aaa]" /></div>
      <DockTitle>Layers</DockTitle>
      <div className="flex h-7 shrink-0 items-center">
        <SmallButton label="Layer styling">{small.brush}</SmallButton>
        <SmallButton label="Add group">{small.group}</SmallButton>
        <SmallButton label="Map themes" menu>{small.eye}</SmallButton>
        <SmallButton label="Filter legend" menu>{small.filter}</SmallButton>
        <SmallButton label="Filter by expression">{small.expr}</SmallButton>
        <Drop off width="w-2.5" />
        <SmallButton label="Expand all">{small.expand}</SmallButton>
        <More label="More layer tools" className="ml-auto w-4" />
      </div>
      <div className="mb-0.5 min-h-0 flex-1">
        <TreeBox before="h-[42px]" after="h-[22px]" tail="w-6">
          <ul className="-mt-1.5 flex h-[380px] flex-col font-['Noto_Sans',sans-serif]">
            {layers.map(([name, icon, arrow, mark, tail], i) => (
              <LayerRow key={i} name={name} icon={icon} arrow={arrow} mark={mark} tail={tail} />
            ))}
          </ul>
        </TreeBox>
      </div>
    </aside>
  );
}

/* ---------- elevation raster ---------- */

function Terrain() {
  return (
    <svg viewBox="0 0 474 499" preserveAspectRatio="none" className="block size-full" role="img" aria-label="Elevation raster">
      <defs>
        <linearGradient id="base" x1="0" y1="0" x2="0" y2="1">
          <stop offset="0" stopColor="#252526" />
          <stop offset=".1" stopColor="#383839" />
          <stop offset=".2" stopColor="#474747" />
          <stop offset=".3" stopColor="#595959" />
          <stop offset=".4" stopColor="#6e6e6e" />
          <stop offset=".48" stopColor="#868686" />
          <stop offset=".57" stopColor="#9a9a9a" />
          <stop offset=".68" stopColor="#b0b0b0" />
          <stop offset=".8" stopColor="#c6c6c6" />
          <stop offset=".9" stopColor="#d9d9d9" />
          <stop offset="1" stopColor="#ececec" />
        </linearGradient>
        <linearGradient id="roof" x1="0" y1="0" x2="0" y2="1">
          <stop offset="0" stopColor="#3d3d3d" />
          <stop offset="1" stopColor="#515151" />
        </linearGradient>
        <linearGradient id="east" x1="0" y1="0" x2="0" y2="1">
          <stop offset="0" stopColor="#575757" />
          <stop offset=".4" stopColor="#777777" />
          <stop offset="1" stopColor="#9a9a9a" />
        </linearGradient>
        <linearGradient id="slope" x1="0" y1="0" x2="0" y2="1">
          <stop offset="0" stopColor="#b0b0b0" />
          <stop offset=".55" stopColor="#c0c0c0" />
          <stop offset="1" stopColor="#e2e2e2" />
        </linearGradient>
        <linearGradient id="lane" x1="0" y1="0" x2="0" y2="1">
          <stop offset="0" stopColor="#5e5e5e" />
          <stop offset="1" stopColor="#949494" />
        </linearGradient>
        <linearGradient id="plaza" x1="0" y1="0" x2="0" y2="1">
          <stop offset="0" stopColor="#a0a0a0" />
          <stop offset="1" stopColor="#bcbcbc" />
        </linearGradient>
        <filter id="b1" x="-20%" y="-20%" width="140%" height="140%"><feGaussianBlur stdDeviation="1" /></filter>
        <filter id="b4" x="-40%" y="-40%" width="180%" height="180%"><feGaussianBlur stdDeviation="4" /></filter>
        <filter id="b12" x="-80%" y="-80%" width="260%" height="260%"><feGaussianBlur stdDeviation="12" /></filter>
      </defs>
      <rect width="474" height="499" fill="url(#base)" />

      <g filter="url(#b4)">
        <path d="M34 -10h116v22l-50 4-60 14z" fill="#202020" />
        <path d="M150 -10h115l8 30-90-6-30 10z" fill="#2a2a2b" />
        <path d="M45 56l62-20 10 12 30 60-50 12-60-10z" fill="#444" fillOpacity=".7" />
        <path d="M255 -10l60 0-5 60 20 40-30 60-40-60z" fill="#464646" />
        <path d="M304 90l40-18 140 30v160l-80-6-60-30-40-90z" fill="url(#east)" />
        <path d="M-10 150l66-12 8 24 12 30-76 14z" fill="#686868" />
        <path d="M-10 206l76-16 20 38 30 30H-10z" fill="#888" fillOpacity=".8" />
        <path d="M98 130l34-16 62 92 10 32-52 22z" fill="url(#lane)" />
        <path d="M60 140l26 10 20 40 22 40 26 26-14 14-30-34-30-50z" fill="#666" />
        <path d="M146 92l36 50 46 70-16 12-46-46-34-60z" fill="#5a5a5a" fillOpacity=".8" />
      </g>
      <path d="M58 138l4-2 6 24-6-2zM74 192l12-4 20 12-8 6-12-6z" fill="#666" filter="url(#b1)" />
      <path d="M84 228l8-2 18 36-6 4z" fill="#8f8f8f" filter="url(#b1)" />
      <path d="M1 222l13-4 8 20 6 22H1z" fill="#939393" filter="url(#b1)" />

      <path d="M306 -6h180v62l-37 4-22-14-12-14-30 5-8 26-16-3-24 8-22-14z" fill="#0a0a0b" filter="url(#b1)" />
      <path d="M316 18l40-4 14 20-8 20-22-2-22-8z" fill="#161619" filter="url(#b4)" />
      <path d="M366 54l14-20 16-6 60 30-30 20-60-6z" fill="#262626" filter="url(#b4)" />
      <path d="M266 10l8-20h30l8 34 4 24 18 16 18 14-44-2-14-22z" fill="#505050" filter="url(#b4)" />
      <path d="M352 62l14-4 26-16 14-12 20 6 28 20 32 10v32l-40 0-60-14-30-14z" fill="#3a3a3a" filter="url(#b1)" />
      <path d="M384 76l90 14v18l-50 0-40-14z" fill="#444" filter="url(#b4)" />
      <path d="M415 33l6-4 8 5-4 7-8-1z" fill="#414141" />
      <path d="M311 84l6-7 30 3 20 4 2 26-14 4-26 10z" fill="#666" filter="url(#b4)" />
      <path d="M339 107l18-3 1 28-15 4z" fill="#707070" filter="url(#b1)" />

      <path d="M262 40l22 0 24 60-2 32-16 8-12-10z" fill="#535353" filter="url(#b4)" />
      <path d="M160 66l65-40 34 8 30 96-35 17-41 15-21-1-33-84z" fill="url(#roof)" filter="url(#b1)" />
      <path d="M161 65l36-20 26-13" stroke="#5e5e5e" strokeWidth="4" fill="none" filter="url(#b1)" />
      <path d="M157 76l18 34 15 20" stroke="#6e6e6e" strokeWidth="5" fill="none" filter="url(#b1)" />
      <path d="M190 129l11 18 11 17" stroke="#767676" strokeWidth="3" fill="none" filter="url(#b1)" />

      <path d="M212 163l20-6 30-11 21-13 9 5 13-8 8 14 18 40-30 22-66 4-18-38z" fill="#767676" filter="url(#b1)" />
      <path d="M206 244l30-20 41-4v14h34v-28l33-5 10 60-24 70-80 10-80-10-30 10-50-40 50-30z" fill="url(#plaza)" filter="url(#b4)" />
      <path d="M238 208l60-12 13 10v24h-34v-10l-36-2z" fill="#737373" filter="url(#b1)" />
      <path d="M277 214h34v18h-34z" fill="#707070" />
      <path d="M309 206l8-3 20-4 4 36h-30z" fill="#9e9e9e" filter="url(#b1)" />
      <path d="M312 206l60 6 50 60-20 60-80-20z" fill="#a0a0a0" fillOpacity=".8" filter="url(#b12)" />

      <path d="M126 292l24-24 46-30 34-22" stroke="#838383" strokeWidth="12" fill="none" filter="url(#b4)" />
      <path d="M141 305l28-26 26-14 36-4 22 12 10 48-24 40-64-22z" fill="#b5b5b5" filter="url(#b4)" />
      <path d="M285 270l28-4 4 18-28 4z" fill="#aeaeae" filter="url(#b4)" />
      <path d="M271 305l39-2 24 54-52-3z" fill="#c0c0c0" filter="url(#b1)" />
      <path d="M344 356l60-46 80-20v220h-38l-50-54z" fill="url(#slope)" filter="url(#b4)" />
      <path d="M400 306l74 110M420 300l54 70" stroke="#aaa" strokeWidth="2" fill="none" filter="url(#b1)" />
      <path d="M170 357l100 0 70 5" stroke="#adadad" strokeWidth="4" fill="none" filter="url(#b1)" />
      <path d="M192 364h92l8 140h-76z" fill="#d6d6d6" fillOpacity=".6" filter="url(#b4)" />
      <path d="M286 366l52 1 54 82 40 50H300z" fill="#d0d0d0" fillOpacity=".9" filter="url(#b4)" />
      <ellipse cx="345" cy="478" rx="80" ry="34" fill="#f6f6f6" filter="url(#b12)" />
      <ellipse cx="250" cy="492" rx="90" ry="24" fill="#f4f4f4" filter="url(#b12)" />
      <path d="M342 364l56 88 44 42" stroke="#b4b4b4" strokeWidth="2" fill="none" filter="url(#b1)" />
      <path d="M370 432q-2 10-14 24 8 16 6 40" stroke="#fff" strokeWidth="2" fill="none" filter="url(#b1)" />

      <path d="M110 330l14-2 48 34 2 10-6 46-26 8-4-22 4-4-8-36-14-16z" fill="#c4c4c4" filter="url(#b1)" />
      <path d="M134 364l10 4 22-7 6 9-5 46-26 10-5-20 8-3z" fill="#d6d6d6" filter="url(#b1)" />
      <path d="M134 365l10 38-8 4 4 18" stroke="#b2b2b2" fill="none" />
      <path d="M122 402l20-6M138 456l14-6M76 484l18-4M56 376l12 14M118 388l12-1" stroke="#aaa" strokeWidth="4" fill="none" filter="url(#b4)" />
      <path d="M30 494l12-3v8H30z" fill="#cbcbcb" />
      <ellipse cx="474" cy="190" rx="7" ry="6" fill="#3c3c3c" filter="url(#b4)" />
      <ellipse cx="474" cy="318" rx="14" ry="16" fill="#c4c4c4" filter="url(#b4)" />
      <path d="M420 236l54-24v60z" fill="#808080" filter="url(#b12)" />
    </svg>
  );
}

/* ---------- Speckle panel ---------- */

function SendGlyph({ flip }) {
  return (
    <svg viewBox="0 0 14 12" className="w-3.5 shrink-0" fill="none" stroke="currentColor">
      {flip ? (
        <g>
          <circle cx="5.500" cy="7" r="3.900" strokeWidth="1.400" />
          <path d="M3 7h5M5.500 4.500l1.200 2.500-1.200 2.500M9.500 3l2-2M11 5.500h2.500M10.500 4l3-1.500" />
        </g>
      ) : (
        <g>
          <circle cx="9" cy="5" r="3.900" />
          <path d="M7 3l2 4 2.500-.5M9 2.500l1 2L8 6M4 5.500L.5 7.500M5 8L1.500 10M6.500 10l-2 1.500M1.500 5.500l2-.5" />
        </g>
      )}
    </svg>
  );
}

function Select({ id, value, disabled }) {
  return (
    <span className="grid h-[25px] min-w-0 flex-1">
      <select
        id={id}
        disabled={disabled}
        aria-label={value}
        className={`h-[25px] w-full min-w-0 appearance-none rounded-xs border bg-gradient-to-b from-[#fdfdfd] to-[#eeeeee] pr-4 pl-[3px] opacity-100 [grid-area:1/1] ${disabled ? "border-[#c9c9c9] text-[#8b8b8b]" : "border-[#b0b0b0]"}`}
      >
        <option>{value}</option>
      </select>
      <svg viewBox="0 0 7 4" className="pointer-events-none mr-[7px] w-[7px] self-center justify-self-end [grid-area:1/1]">
        <path d="M0 0h7L3.500 4z" fill={disabled ? "#a8a8a8" : "#555"} />
      </svg>
    </span>
  );
}

function Field({ label, id, children }) {
  return (
    <div className="flex h-[25px] items-center">
      <label htmlFor={id} className="w-[60px] shrink-0 whitespace-nowrap">{label}</label>
      {children}
    </div>
  );
}

const box = "h-[25px] min-w-0 rounded-xs border border-[#b0b0b0] bg-white px-0.5 placeholder:text-[#8b8b8b]";

function SpecklePanel() {
  return (
    <section className="flex min-w-0 flex-[561_1_0%] flex-col text-sm text-[#111]">
      <div className="flex h-[42px] shrink-0 items-center bg-[#3b82f6] pl-[18px] text-white">
        <svg viewBox="0 0 92 27" className="w-[92px]" role="img" aria-label="SPECKLE">
          <path d="M0 5L92 0v22L0 27z" fill="#fff" />
          <path d="M5 10l2-1 10-.5V20L7 21l-2-1z" fill="#3b82f6" />
          <path d="M5 10l2 1v10l-2-1z" fill="#9cc3fc" />
          <text x="18.500" y="20.500" transform="rotate(-3 18 20)" fontFamily="Roboto, sans-serif" fontWeight="600" fontSize="16" fill="#3b82f6">SPECKLE</text>
        </svg>
        <span className="ml-2.5 text-[13px]">for QGIS</span>
        <span className="mt-3 ml-4 text-[9px]">0.0.99</span>
      </div>
      <form className="flex flex-col gap-[5px] pt-[23px] pr-[15px] pl-[17px]" onSubmit={(e) => e.preventDefault()}>
        <Field label="Stream" id="stream">
          <Select id="stream" value="QGIS official test stream, 17b0b76d13 | https://speckle.xyz" />
          <button type="button" aria-label="Search streams" className="ml-2.5 flex size-4 items-center justify-center">
            <svg viewBox="0 0 12 12" className="size-3" fill="none" stroke="#333"><circle cx="4.700" cy="4.700" r="3.500" strokeWidth="1.400" /><path d="M7.500 7.500l4 4" strokeWidth="1.900" /></svg>
          </button>
          <button type="button" aria-label="Delete stream" className="mr-[3px] ml-3 flex size-4 items-center justify-center">
            <svg viewBox="0 0 10 12" className="h-3" fill="#000"><path d="M0 1h3l.7-1h2.600L7 1h3v1.500H0zM1 3.500h8V11q0 1-1 1H2q-1 0-1-1z" /></svg>
          </button>
        </Field>
        <Field label="Branch" id="branch"><Select id="branch" value="showcases" /></Field>
        <Field label="Commit" id="commit"><Select id="commit" value="Latest commit from this branch" disabled /></Field>
        <div className="grid h-[43px] grid-cols-2 pt-1.5 pl-[60px]">
          <button type="button" className="flex items-center justify-center gap-0.5 text-[#3b82f6]"><SendGlyph />Send</button>
          <button type="button" className="flex items-center justify-center gap-0.5"><SendGlyph flip />Receive</button>
        </div>
        <div className="flex pl-[60px]"><Select id="mode" value="Send selected layers" /></div>
        <ul aria-label="Selected layers" className="ml-[60px] h-[70px] border border-[#bcbcbc] text-[11px] text-[#8b8b8b]">
          <li className="flex items-center gap-[5px] px-[3px] pt-[3px] font-[Lato,'Noto_Sans',sans-serif] leading-4">
            <svg viewBox="0 0 18 14" className="w-[18px]"><path d="M1 4q1-4 5-2t7-.5q4-1 4 3t-2 4-6 1-5 3Q0 13 1 9z" fill="#e9e9e9" stroke="#d0d0d0" /></svg>
            building
          </li>
        </ul>
        <button type="button" className="h-[25px] self-end">Save current layer selection</button>
        <button type="button" className="h-[25px] self-end">Apply transformations on Send</button>
        <Field label="Message" id="message">
          <input id="message" type="text" placeholder="Sent XXX objects from QGIS" className={`${box} flex-1`} />
        </Field>
        <div className="flex h-[25px] items-center gap-1 pl-[60px]">
          <Check checked id="bg" label="Send/receive in the background (experimental!)" />
          <label htmlFor="bg">Send/receive in the background (experimental!)</label>
        </div>
        <div className="flex h-9 justify-center pl-[60px]">
          <button type="submit" className="flex w-[184px] items-center justify-center gap-1.5 rounded-[14px] bg-[#3b82f6] text-white">
            <SendGlyph />SEND
          </button>
        </div>
        <Field label="Lat, Lon" id="lat">
          <input id="lat" type="text" defaultValue="52.571706" className={`${box} w-[140px]`} />
          <span className="ml-1.5 w-3">º</span>
          <input aria-label="Longitude" type="text" defaultValue="13.425303" className={`${box} w-[140px]`} />
          <span className="ml-1.5">º</span>
          <button type="button" className="ml-auto whitespace-nowrap">Set as a project center</button>
        </Field>
        <div className="flex h-[25px] items-center justify-between pl-[60px]">
          <button type="button">Refresh</button>
          <button type="button">Close</button>
        </div>
      </form>
    </section>
  );
}

/* ---------- status bar ---------- */

function Spin({ id, value }) {
  return (
    <span className="flex h-6 w-[90px] shrink-0 overflow-hidden rounded-xs border border-[#b0b0b0] bg-white">
      <input id={id} type="text" defaultValue={value} className="min-w-0 flex-1 pl-1 text-[13px]" />
      <span className="flex w-3 flex-col border-l border-[#c4c4c4] bg-[#f6f6f6]">
        <button type="button" aria-label="Increase" className="flex flex-1 items-center justify-center"><Tri dir="u" /></button>
        <button type="button" aria-label="Decrease" className="flex flex-1 items-center justify-center"><Tri dir="d" /></button>
      </span>
    </span>
  );
}

function StatusBar() {
  return (
    <footer className="flex h-7 shrink-0 items-center pb-px text-xs text-[#111]">
      <label className="flex h-[25px] w-[267px] shrink-0 items-center rounded-xs border border-[#b0b0b0] bg-white pl-1.5">
        <svg viewBox="0 0 12 12" className="size-3" fill="none" stroke="#8a8a8a"><circle cx="4.800" cy="4.800" r="3.800" /><path d="M7.700 7.700l3.800 3.800" strokeWidth="1.300" /></svg>
        <input type="text" aria-label="Locate" placeholder="Type to locate (Ctrl+K)" className="min-w-0 flex-1 pl-2 text-sm placeholder:text-[#8b8b8b]" />
      </label>
      <label htmlFor="coord" className="ml-auto">Coordinate</label>
      <input id="coord" type="text" defaultValue="1824098,6134773" className="ml-[3px] h-6 w-[121px] rounded-xs border border-[#b0b0b0] bg-white text-center text-[13px]" />
      <button type="button" aria-label="Toggle extents" className="ml-1.5 w-[25px]">
        <svg viewBox="0 0 14 14" className="size-3.5" fill="none" stroke="#333"><ellipse cx="5" cy="6" rx="3" ry="4.500" transform="rotate(-30 5 6)" fill="#bbb" /><path d="M1 3l8 7M5 1l-1 5M2 6l5-3M7 7l6-6M8 9l5 2" /><circle cx="10" cy="10" r="2.500" fill="#ddd" /></svg>
      </button>
      <label htmlFor="scale">Scale</label>
      <span className="ml-[3px] grid h-6 w-[97px]">
        <select id="scale" className="h-6 w-full appearance-none rounded-xs border border-[#b0b0b0] bg-white pl-[3px] text-[13px] [grid-area:1/1]"><option>1:5229</option></select>
        <span className="pointer-events-none my-px mr-px flex w-[17px] items-center justify-center justify-self-end border-l border-[#c4c4c4] bg-[#f6f6f6] [grid-area:1/1]"><Tri dir="d" /></span>
      </span>
      <button type="button" aria-label="Lock scale" className="ml-3 w-5">
        <svg viewBox="0 0 11 14" className="w-[11px]"><path d="M2.500 7V4.500a3 3 0 0 1 6 0V7" fill="none" stroke="#777" strokeWidth="1.500" /><rect y="6.500" width="11" height="7" rx="1" fill="#5f5f5f" /></svg>
      </button>
      <label htmlFor="mag">Magnifier</label>
      <span className="ml-[3px] flex"><Spin id="mag" value="100%" /></span>
      <label htmlFor="rot" className="ml-2">Rotation</label>
      <span className="mx-2 flex"><Spin id="rot" value="0.0 º" /></span>
      <Check checked id="render" label="Render" />
      <label htmlFor="render" className="ml-1">Render</label>
      <button type="button" className="ml-4 flex items-center gap-0.5 text-[13px]">
        <svg viewBox="0 0 14 14" className="size-3.5" fill="none" stroke="#777"><circle cx="7" cy="6" r="4.500" fill="#c9c9c9" /><ellipse cx="7" cy="6" rx="2" ry="4.500" /><path d="M0 6h14M3 3.500h8M3 8.500h8M7 10.500V13" /></svg>
        EPSG:3857
      </button>
      <button type="button" aria-label="Messages" className="mr-[25px] ml-6">
        <svg viewBox="0 0 15 14" className="w-[15px]"><ellipse cx="7.500" cy="6" rx="7.300" ry="5.500" fill="#5f5f5f" /><path d="M8 10h5v4z" fill="#5f5f5f" /><path d="M4 6h1.500M6.800 6h1.500M9.600 6h1.500" stroke="#fff" strokeWidth="1.500" /></svg>
      </button>
    </footer>
  );
}

export default function App() {
  return (
    <div className="flex h-screen flex-col overflow-hidden bg-[#efefef] font-['Noto_Sans','Open_Sans',sans-serif]">
      <Header />
      <main className="flex min-h-0 flex-1">
        <Docks />
        <div className="flex w-[5px] shrink-0 items-center justify-center"><div className="h-4 border-l border-dotted border-[#b5b5b5]" /></div>
        <div className="flex min-w-0 flex-[485_1_0%]">
          <div className="mt-px mb-0.5 min-w-0 flex-1 border border-[#c4c4c4] bg-white pt-[30px] pr-[9px] pb-[9px]">
            <Terrain />
          </div>
        </div>
        <div className="flex w-1.5 shrink-0 items-center justify-center"><div className="h-4 border-l border-dotted border-[#b5b5b5]" /></div>
        <SpecklePanel />
      </main>
      <StatusBar />
    </div>
  );
}
